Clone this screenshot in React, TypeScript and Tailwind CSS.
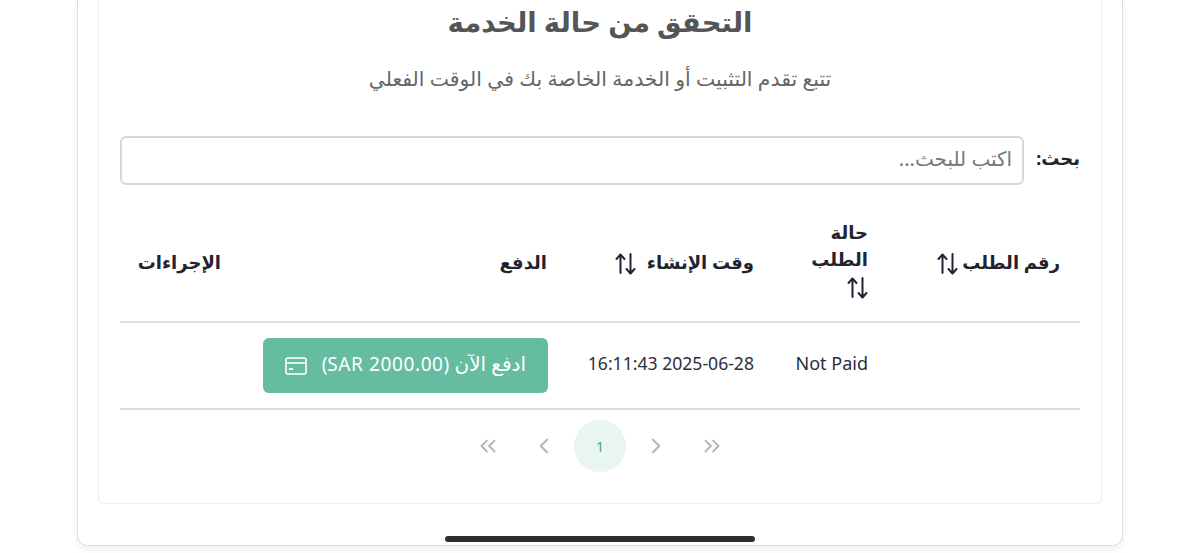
import { ChevronLeft, ChevronRight, ChevronsLeft, ChevronsRight } from "lucide-react";

function SortIcon({ className = "" }: { className?: string }) {
  return (
    <svg
      className={`inline-block align-middle shrink-0 ${className}`}
      width="22"
      height="24"
      viewBox="0 0 22 24"
      fill="none"
      stroke="currentColor"
      strokeWidth={2}
      strokeLinecap="round"
      strokeLinejoin="round"
    >
      <path d="M6.5 21V3M2.5 7l4-4.5 4 4.5" />
      <path d="M16.5 2v19M12.5 17l4 4.5 4-4.5" />
    </svg>
  );
}

function CardIcon() {
  return (
    <svg width="22" height="18" viewBox="0 0 22 18" fill="none" stroke="currentColor" strokeWidth={1.6}>
      <rect x="1" y="1" width="20" height="16" rx="2" />
      <path d="M1 6h20" />
      <path d="M4 12h4" strokeWidth={2} />
    </svg>
  );
}

const pageBtn = "flex items-center justify-center w-[52px] h-[52px] rounded-full text-[#b4b4b4]";

export default function App() {
  return (
    <div
      dir="rtl"
      className="relative h-[553px] w-[1200px] overflow-hidden bg-white font-['Noto_Sans','DejaVu_Sans',sans-serif]"
    >
      <div className="mx-[77px] h-[546px] rounded-b-[10px] border border-t-0 border-[#dcdcdc] bg-white px-5 shadow-[0_4px_8px_rgba(0,0,0,0.06)]">
        <div className="h-[504px] rounded-b-md border border-t-0 border-[#eeeeee] px-[21px]">
          <h1 className="pt-[2px] text-center text-[27.5px] leading-[40px] font-bold text-[#555555]">
            التحقق من حالة الخدمة
          </h1>
          <p className="mt-[23px] text-center text-[20.4px] leading-[26px] text-[#666666]">
            تتبع تقدم التثبيت أو الخدمة الخاصة بك في الوقت الفعلي
          </p>

          <div className="mt-[45px] flex items-center gap-[12px]">
            <label className="-mt-[5px] text-[18px] font-bold text-[#1f2430]">بحث:</label>
            <input
              type="text"
              placeholder="اكتب للبحث..."
              className="h-[49px] flex-1 rounded-md border-2 border-[#d8d8d8] bg-white px-[10px] pb-[4px] text-[20px] outline-none placeholder:text-[#777777]"
            />
          </div>

          <table className="mt-[19px] w-[960px] table-fixed border-collapse">
            <colgroup>
              <col className="w-[192px]" />
              <col className="w-[114px]" />
              <col className="w-[207px]" />
              <col className="w-[326px]" />
              <col className="w-[121px]" />
            </colgroup>
            <thead>
              <tr className="h-[118px] border-b-2 border-[#dcdde0] text-right text-[18px] leading-[27px] font-bold text-[#1f2430]">
                <th className="px-5 font-bold">
                  رقم الطلب <SortIcon />
                </th>
                <th className="px-5 pb-[6px] font-bold">
                  حالة الطلب <SortIcon />
                </th>
                <th className="px-5 font-bold">
                  وقت الإنشاء <SortIcon className="mr-[6px]" />
                </th>
                <th className="px-5 font-bold">الدفع</th>
                <th className="px-5 font-bold">الإجراءات</th>
              </tr>
            </thead>
            <tbody>
              <tr className="h-[87px] border-b-2 border-[#dcdde0] text-[18px] text-[#2b2f3a]">
                <td className="px-5 pb-[5px]"></td>
                <td className="px-5 pb-[5px]">Not Paid</td>
                <td className="px-5 pb-[5px] text-[17.6px] whitespace-nowrap">2025-06-28 16:11:43</td>
                <td className="px-5">
                  <button className="-mr-px flex h-[55px] w-[285px] items-center justify-between rounded-md bg-[#65bca1] px-[22px] pb-[3px] text-white">
                    <span className="text-[20px]">
                      ادفع الآن <span className="text-[19px] tracking-[0.6px]">(SAR 2000.00)</span>
                    </span>
                    <span className="pt-[3px]">
                      <CardIcon />
                    </span>
                  </button>
                </td>
                <td className="px-5"></td>
              </tr>
            </tbody>
          </table>

          <div dir="ltr" className="mt-[10px] flex justify-center gap-[4px]">
            <button className={pageBtn}>
              <ChevronsLeft size={26} strokeWidth={1.75} />
            </button>
            <button className={pageBtn}>
              <ChevronLeft size={26} strokeWidth={1.75} />
            </button>
            <button className="flex h-[52px] w-[52px] items-center justify-center rounded-full bg-[#e8f5f1] text-[14px] text-[#4f9d85]">
              1
            </button>
            <button className={pageBtn}>
              <ChevronRight size={26} strokeWidth={1.75} />
            </button>
            <button className={pageBtn}>
              <ChevronsRight size={26} strokeWidth={1.75} />
            </button>
          </div>
        </div>
      </div>

      {/* home indicator */}
      <div className="absolute bottom-[11px] left-[445px] h-[6px] w-[310px] rounded-full bg-[#2e2e2e]"></div>
    </div>
  );
}
